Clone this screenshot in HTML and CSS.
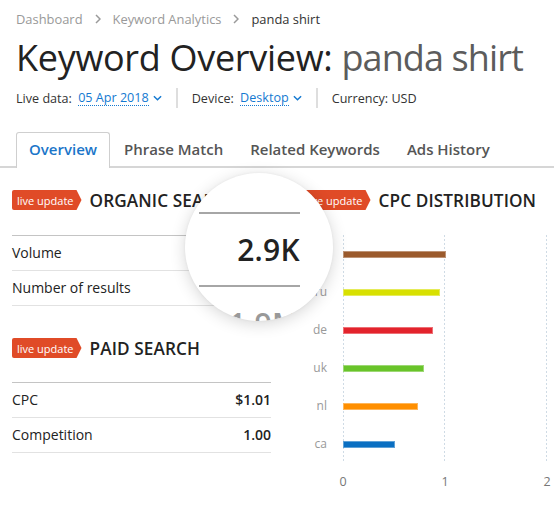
FILE: index.html
```html
<!DOCTYPE html>
<html lang="en">
<head>
<meta charset="utf-8">
<title>Keyword Overview: panda shirt</title>
<link rel="stylesheet" href="styles.css">
</head>
<body>
<div class="page">
  <nav class="crumbs">
    <a class="crumb">Dashboard</a>
    <svg class="chev" viewBox="0 0 6 10" width="6" height="10"><path d="M1 1l4 4-4 4" fill="none" stroke="#9a9a9a" stroke-width="1.5"/></svg>
    <a class="crumb">Keyword Analytics</a>
    <svg class="chev" viewBox="0 0 6 10" width="6" height="10"><path d="M1 1l4 4-4 4" fill="none" stroke="#9a9a9a" stroke-width="1.5"/></svg>
    <span class="crumb current">panda shirt</span>
  </nav>

  <h1 class="title">Keyword Overview: <span class="kw">panda shirt</span></h1>

  <div class="meta">
    <span class="meta-item">Live data: <a class="drop">05 Apr 2018</a><svg class="caret" viewBox="0 0 10 6" width="9" height="6"><path d="M1 1l4 4 4-4" fill="none" stroke="#1479d1" stroke-width="1.6"/></svg></span>
    <i class="vsep"></i>
    <span class="meta-item">Device: <a class="drop">Desktop</a><svg class="caret" viewBox="0 0 10 6" width="9" height="6"><path d="M1 1l4 4 4-4" fill="none" stroke="#1479d1" stroke-width="1.6"/></svg></span>
    <i class="vsep"></i>
    <span class="meta-item">Currency: USD</span>
  </div>

  <div class="tabs">
    <a class="tab active">Overview</a>
    <a class="tab">Phrase Match</a>
    <a class="tab">Related Keywords</a>
    <a class="tab">Ads History</a>
  </div>

  <div class="panels">
    <section class="col">
      <header class="sec-head"><span class="badge">live update</span><h2>ORGANIC SEARCH</h2></header>
      <div class="table">
        <div class="row"><span>Volume</span></div>
        <div class="row"><span>Number of results</span></div>
      </div>

      <header class="sec-head paid"><span class="badge">live update</span><h2>PAID SEARCH</h2></header>
      <div class="table table-paid">
        <div class="row"><span>CPC</span><b>$1.01</b></div>
        <div class="row"><span>Competition</span><b>1.00</b></div>
      </div>
    </section>

    <section class="col">
      <header class="sec-head"><span class="badge">live update</span><h2>CPC DISTRIBUTION</h2></header>
      <div class="chart">
        <div class="cats">
          <span>us</span><span>ru</span><span>de</span><span>uk</span><span>nl</span><span>ca</span>
        </div>
        <div class="plot">
          <i class="gline g0"></i><i class="gline g1"></i><i class="gline g2"></i>
          <div class="bar-row"><span class="bar brown" style="width:50.5%"></span></div>
          <div class="bar-row"><span class="bar lime" style="width:47.5%"></span></div>
          <div class="bar-row"><span class="bar red" style="width:44%"></span></div>
          <div class="bar-row"><span class="bar green" style="width:39.5%"></span></div>
          <div class="bar-row"><span class="bar orange" style="width:37%"></span></div>
          <div class="bar-row"><span class="bar blue" style="width:25.5%"></span></div>
        </div>
        <div class="axis"><span>0</span><span>1</span><span>2</span></div>
      </div>
    </section>
  </div>

  <!-- magnified value column of the organic table -->
  <div class="loupe">
    <div class="loupe-body">
      <div class="loupe-row">2.9K</div>
      <div class="loupe-row dim">1.9M</div>
    </div>
  </div>
</div>
</body>
</html>
```

FILE: styles.css
```css
* { box-sizing: border-box; }

html, body {
  margin: 0;
  background: #fff;
}

body {
  font-family: "Open Sans", "Noto Sans", "DejaVu Sans", sans-serif;
  color: #222;
}

.page {
  position: relative;
  width: 554px;
  height: 506px;
  overflow: hidden;
}

/* breadcrumbs */
.crumbs {
  display: flex;
  align-items: center;
  gap: 12px;
  padding: 11px 16px 0;
  height: 27px;
  font-size: 12.9px;
  line-height: 16px;
}
.crumb { color: #999; }
.crumb.current { color: #333; }
.chev { flex: none; }

/* page title */
.title {
  margin: 9px 0 0 16px;
  font-size: 36px;
  line-height: 44px;
  font-weight: 400;
  color: #222;
  letter-spacing: -0.3px;
}
.title .kw { color: #5c5c5c; letter-spacing: -0.9px; }

/* meta line */
.meta {
  display: flex;
  align-items: center;
  gap: 14px;
  margin: 8px 0 0 16px;
  height: 20px;
  font-size: 12.6px;
  color: #333;
}
.meta-item { display: flex; align-items: center; gap: 3px; white-space: pre; }
.drop {
  color: #1479d1;
  border-bottom: 1px dotted #1479d1;
  line-height: 15px;
}
.caret { margin-left: 1px; }
.vsep {
  width: 2px;
  height: 20px;
  background: #dedede;
}

/* tabs */
.tabs {
  display: flex;
  align-items: flex-end;
  margin-top: 24px;
  padding-left: 16px;
  height: 36px;
  border-bottom: 2px solid #d6d6d6;
}
.tab {
  height: 35px;
  margin-bottom: -2px;
  padding: 0 12px 4px 13px;
  display: flex;
  align-items: center;
  font-size: 15px;
  font-weight: 600;
  color: #555;
  border: 1px solid transparent;
  border-bottom: none;
  border-radius: 3px 3px 0 0;
}
.tab.active {
  color: #1b76c9;
  background: #fff;
  border-color: #cfcfcf;
  height: 36px;
  padding-left: 12px;
}

/* panels */
.panels {
  display: grid;
  grid-template-columns: 259px 1fr;
  column-gap: 30px;
  padding-left: 12px;
  margin-top: 22px;
}

.sec-head {
  display: flex;
  align-items: center;
  gap: 8px;
  height: 20px;
}
.sec-head h2 {
  margin: 0;
  font-size: 17.2px;
  font-weight: 600;
  color: #222;
  letter-spacing: 0.1px;
  white-space: nowrap;
}
.badge {
  flex: none;
  height: 20px;
  padding: 0 8px 0 5px;
  display: flex;
  align-items: center;
  font-size: 11px;
  color: #fff;
  background: #e04b27;
  clip-path: polygon(0 0, calc(100% - 5px) 0, 100% 50%, calc(100% - 5px) 100%, 0 100%);
  border-radius: 2px 0 0 2px;
}

.table {
  margin-top: 25px;
  border-top: 1px solid #c4c4c4;
  font-size: 14px;
  color: #222;
}
.row {
  display: flex;
  justify-content: space-between;
  align-items: center;
  height: 35px;
  border-bottom: 1px solid #e2e2e2;
  padding-bottom: 2px;
}
.row b { font-weight: 600; }

.sec-head.paid { margin-top: 32px; }
.table-paid { margin-top: 24px; }

/* CPC chart */
.chart {
  display: grid;
  grid-template-columns: 42px 204px;
  margin-top: 25px;
}
.cats {
  display: flex;
  flex-direction: column;
  padding-right: 16px;
  align-items: flex-end;
}
.cats span {
  height: 38px;
  line-height: 38px;
  font-size: 12px;
  color: #999;
}
.plot {
  position: relative;
  height: 228px;
}
.gline {
  position: absolute;
  top: 0;
  bottom: 0;
  width: 1px;
  background: repeating-linear-gradient(to bottom, #cfdbe5 0 2px, transparent 2px 4px);
}
.g0 { left: 0; }
.g1 { left: 101px; }
.g2 { left: 203px; }
.bar-row {
  position: relative;
  height: 38px;
  display: flex;
  align-items: center;
}
.bar {
  display: block;
  height: 7px;
  border: 1px solid rgba(255, 255, 255, 0.35);
}
.brown { background: #9b5a2c; }
.lime { background: #d8e000; }
.red { background: #e3232c; }
.green { background: #69c42a; }
.orange { background: #ff8f00; }
.blue { background: #0a6fc2; }

.axis {
  grid-column: 2;
  display: flex;
  justify-content: space-between;
  margin-top: 10px;
  font-size: 12.5px;
  color: #777;
}
.axis span {
  width: 0;
  display: flex;
  justify-content: center;
}

/* magnifier loupe over the organic table */
.loupe {
  position: absolute;
  left: 185px;
  top: 173px;
  width: 148px;
  height: 148px;
  border-radius: 50%;
  background: #fff;
  overflow: hidden;
  box-shadow: 0 3px 16px rgba(0, 0, 0, 0.16), 0 0 3px rgba(0, 0, 0, 0.05);
}
.loupe-body {
  margin: 39px 0 0 14px;
  width: 101px;
  border-top: 2px solid #a6a6a6;
}
.loupe-row {
  height: 73px;
  display: flex;
  align-items: center;
  justify-content: flex-end;
  font-size: 30px;
  font-weight: 600;
  color: #222;
  border-bottom: 2px solid #a6a6a6;
  letter-spacing: 0.3px;
}
.loupe-row.dim {
  color: #999;
  border-bottom: none;
}
```
